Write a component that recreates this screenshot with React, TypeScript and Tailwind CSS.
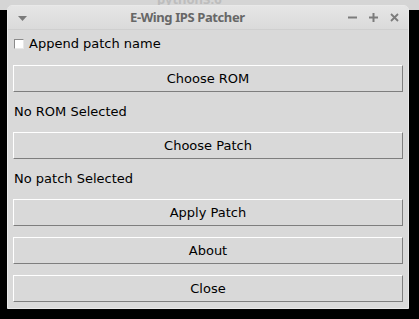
import { useState } from "react";

const body = { fontFamily: '"DejaVu Sans", "Liberation Sans", sans-serif' };
const title = { fontFamily: '"Noto Sans", "Open Sans", sans-serif' };

function TkButton({ label, className = "" }: { label: string; className?: string }) {
  return (
    <button
      className={`h-[27px] w-full bg-[#d9d9d9] border border-t-white border-l-white border-b-[#7e7e7e] border-r-[#7e7e7e] text-[13px] text-black flex items-center justify-center ${className}`}
    >
      {label}
    </button>
  );
}

function StatusLine({ text }: { text: string }) {
  return (
    <div className="h-[40px] flex items-center pl-[1px] text-[13px] text-black">{text}</div>
  );
}

export default function App() {
  const [append, setAppend] = useState(false);

  return (
    <div className="relative w-[419px] h-[319px] bg-black overflow-hidden" style={body}>
      {/* window behind, only its title bar edge shows */}
      <div className="absolute inset-x-0 top-0 h-[10px] bg-[#d5d5d5] overflow-hidden">
        <span
          className="absolute left-[157px] top-[-10px] text-[13px] font-bold text-[#bdbdbd]"
          style={title}
        >
          python3.6
        </span>
      </div>

      <div className="absolute left-[7px] top-[5px] w-[402px] h-[304px] flex flex-col rounded-t-[5px] border border-[#e9e9e9] bg-[#d9d9d9] overflow-hidden">
        {/* title bar */}
        <div className="h-[24px] flex items-center bg-gradient-to-b from-[#e6e6e6] to-[#dadada] border-b border-[#cfcfcf]">
          <svg width="9" height="5" viewBox="0 0 9 5" className="ml-[10px] mt-[1px]">
            <path d="M0 0h9L4.5 5z" fill="#7a7a7a" />
          </svg>
          <div className="w-[103px]" />
          <span
            className="text-[13px] font-bold tracking-[-0.4px] text-[#676767] leading-none"
            style={title}
          >
            E-Wing IPS Patcher
          </span>
          <div className="flex-1" />
          <div className="flex items-center gap-[12px] mr-[9px] text-[#7c7c7c]">
            <svg width="9" height="9" viewBox="0 0 9 9">
              <path d="M0 4.5h9" stroke="currentColor" strokeWidth="2" />
            </svg>
            <svg width="9" height="9" viewBox="0 0 9 9">
              <path d="M0 4.5h9M4.5 0v9" stroke="currentColor" strokeWidth="2" />
            </svg>
            <svg width="9" height="9" viewBox="0 0 9 9">
              <path d="M1 1l7 7M8 1l-7 7" stroke="currentColor" strokeWidth="1.8" />
            </svg>
          </div>
        </div>

        {/* contents */}
        <div className="flex flex-col px-[5px]">
          <label className="h-[28px] flex items-center gap-[5px] pl-[1px] text-[13px] text-black">
            <span
              onClick={() => setAppend(!append)}
              className="w-[10px] h-[10px] bg-white border border-t-[#8a8a8a] border-l-[#8a8a8a] border-b-[#e8e8e8] border-r-[#e8e8e8] flex items-center justify-center text-[9px] leading-none"
            >
              {append ? "✓" : ""}
            </span>
            Append patch name
          </label>
          <TkButton label="Choose ROM" className="mt-[7px]" />
          <StatusLine text="No ROM Selected" />
          <TkButton label="Choose Patch" />
          <StatusLine text="No patch Selected" />
          <TkButton label="Apply Patch" />
          <TkButton label="About" className="mt-[11px]" />
          <TkButton label="Close" className="mt-[11px]" />
        </div>
      </div>
    </div>
  );
}
